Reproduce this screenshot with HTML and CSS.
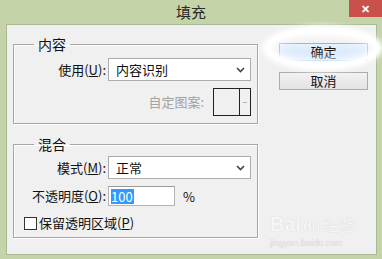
FILE: index.html
```html
<!DOCTYPE html>
<html lang="zh-CN">
<head>
  <meta charset="UTF-8">
  <title>填充</title>
  <link rel="stylesheet" href="styles.css">
</head>
<body>
<div class="titlebar">
  <span></span>
  <div class="title">填充</div>
  <div class="close">✕</div>
</div>
<div class="dialog">
  <div class="left">
    <fieldset class="group group-content">
      <legend>内容</legend>
      <div class="row">
        <label class="lbl">使用(<u>U</u>):</label>
        <div class="select">
          <span>内容识别</span>
          <svg width="9" height="6" viewBox="0 0 9 6"><polyline points="1,1 4.5,4.5 8,1" fill="none" stroke="#444" stroke-width="1.6"/></svg>
        </div>
      </div>
      <div class="row row-pattern">
        <span class="lbl-off">自定图案:</span>
        <div class="pattern">
          <span class="swatch"></span>
          <span class="pick"><i></i></span>
        </div>
      </div>
    </fieldset>
    <fieldset class="group group-blend">
      <legend>混合</legend>
      <div class="row">
        <label class="lbl">模式(<u>M</u>):</label>
        <div class="select">
          <span>正常</span>
          <svg width="9" height="6" viewBox="0 0 9 6"><polyline points="1,1 4.5,4.5 8,1" fill="none" stroke="#444" stroke-width="1.6"/></svg>
        </div>
      </div>
      <div class="row">
        <label class="lbl">不透明度(<u>O</u>):</label>
        <div class="input"><span class="sel">100</span></div>
        <span class="unit">%</span>
      </div>
      <div class="row row-check">
        <span class="check"></span>
        <span>保留透明区域(<u>P</u>)</span>
      </div>
    </fieldset>
  </div>
  <div class="right">
    <div class="btn btn-default">确定</div>
    <div class="btn">取消</div>
  </div>
  <div class="glow"></div>
  <div class="mark">
    <div class="mark-logo">Bai<span class="paw">du</span><span class="cn">经验</span></div>
    <div class="mark-url">jingyan.baidu.com</div>
  </div>
</div>
</body>
</html>
```

FILE: styles.css
```css
body {
  margin: 0;
  background-color: #c4d3a8;
  font-family: "Noto Sans CJK SC", "Noto Sans", sans-serif;
  font-size: 13px;
  color: #111;
}

.titlebar {
  height: 24px;
  display: grid;
  grid-template-columns: 1fr auto 1fr;
  align-items: start;
}

.title {
  font-size: 15px;
  line-height: 24px;
  color: #2a2a2a;
}

.close {
  justify-self: end;
  width: 33px;
  height: 17px;
  background-color: #c9514b;
  color: #fff;
  font-size: 11px;
  font-weight: bold;
  line-height: 16px;
  text-align: center;
}

.dialog {
  position: relative;
  height: 231px;
  margin: 0 5px 0 6px;
  padding: 11px 0 0 6px;
  box-sizing: border-box;
  border: 1px solid #a9b995;
  background-color: #f0f0f0;
  display: flex;
  align-items: flex-start;
}

.left {
  width: 245px;
}

.group {
  margin: 0;
  padding: 6px 6px 7px 10px;
  border: 1px solid #a6a6a6;
  box-shadow: 1px 1px 0 #fff, inset 1px 1px 0 #fff;
}

.group legend {
  margin-left: 10px;
  padding: 0 4px;
  line-height: 16px;
  font-size: 14px;
}

.group-blend {
  margin-top: 12px;
  padding-top: 4px;
  padding-bottom: 6px;
}

.row {
  display: flex;
  align-items: center;
}

.row + .row {
  margin-top: 7px;
}

.lbl {
  width: 82px;
  margin-right: 2px;
  text-align: right;
  line-height: 16px;
  white-space: nowrap;
}

.select {
  flex: 1;
  height: 23px;
  box-sizing: border-box;
  padding: 0 5px 0 7px;
  border: 1px solid #acacac;
  background-color: #fff;
  display: flex;
  align-items: center;
  justify-content: space-between;
  line-height: 16px;
}

.row-pattern {
  justify-content: flex-end;
  gap: 9px;
}

.lbl-off {
  color: #a3a3a3;
  line-height: 16px;
}

.pattern {
  width: 38px;
  height: 28px;
  box-sizing: border-box;
  border: 1px solid #222;
  display: flex;
}

.swatch {
  width: 25px;
  border-right: 1px solid #222;
  background-color: #f0f0f0;
}

.pick {
  flex: 1;
  display: flex;
  align-items: center;
  justify-content: center;
}

.pick i {
  width: 4px;
  height: 1px;
  background-color: #b5b5b5;
}

.input {
  width: 67px;
  height: 20px;
  box-sizing: border-box;
  padding-left: 2px;
  border: 1px solid #b5b5b5;
  border-top-color: #9a9a9a;
  background-color: #fff;
  display: flex;
  align-items: center;
}

.sel {
  background-color: #3399ff;
  color: #fff;
  line-height: 15px;
  padding-right: 1px;
}

.unit {
  margin-left: 8px;
}

.row-check {
  gap: 2px;
  line-height: 16px;
}

.row + .row-check {
  margin-top: 9px;
}

.check {
  width: 11px;
  height: 11px;
  border: 1px solid #333;
  background-color: #fff;
}

.right {
  margin-left: 21px;
  padding-top: 7px;
  width: 89px;
}

.btn {
  height: 18px;
  box-sizing: border-box;
  border: 1px solid #acacac;
  background: linear-gradient(#f2f2f2, #e3e3e3);
  text-align: center;
  line-height: 16px;
}

.btn + .btn {
  margin-top: 11px;
}

.btn-default {
  border-color: #7eb4ea;
  background: linear-gradient(#e6f1fc, #cfe4fa);
}

.glow {
  position: absolute;
  left: 257px;
  top: 2px;
  width: 117px;
  height: 42px;
  border-radius: 50%;
  border: 7px solid #fff;
  box-sizing: border-box;
  filter: blur(1.5px);
  box-shadow: 0 0 4px 2px rgba(255, 255, 255, 0.9), inset 0 0 7px 4px rgba(255, 255, 255, 0.8);
}

.mark {
  position: absolute;
  left: 263px;
  top: 188px;
  opacity: 0.4;
  color: #fff;
  text-shadow: 0 0 1px #b0b0b0, 0 0 1px #b0b0b0;
}

.mark-logo {
  font-family: "Liberation Sans", sans-serif;
  font-size: 20px;
  font-weight: bold;
  line-height: 22px;
}

.paw {
  margin-left: 2px;
  font-size: 14px;
}

.cn {
  margin-left: 3px;
  font-family: "Noto Sans CJK SC", sans-serif;
  font-size: 16px;
  font-weight: normal;
}

.mark-url {
  font-family: "Liberation Sans", sans-serif;
  font-size: 9px;
  line-height: 12px;
  color: #ddd;
}
```
